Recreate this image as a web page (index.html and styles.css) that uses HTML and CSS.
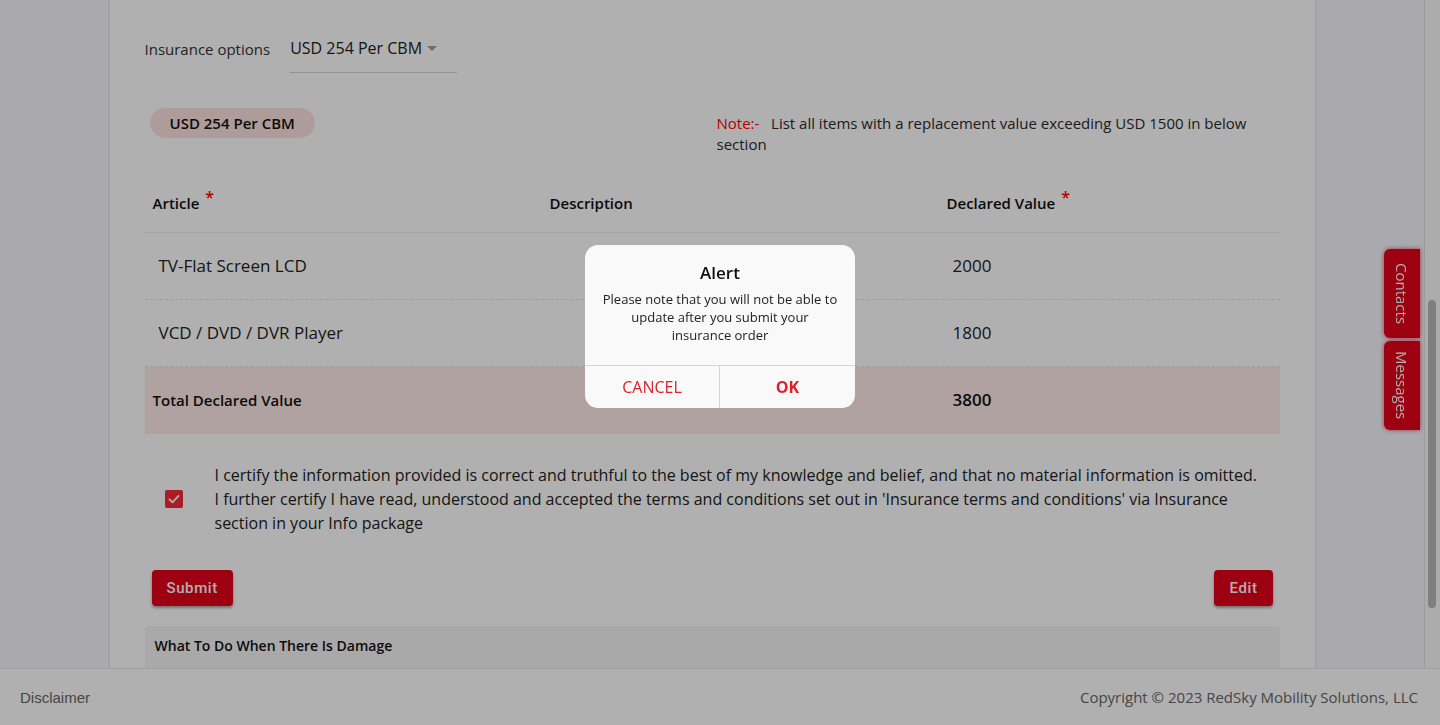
FILE: index.html
```html
<!DOCTYPE html>
<html lang="en">
<head>
  <meta charset="UTF-8">
  <meta name="viewport" content="width=device-width, initial-scale=1.0">
  <title>Insurance</title>
  <link rel="stylesheet" href="styles.css">
</head>
<body>
  <div class="app">
    <main class="main">
      <section class="card">
        <div class="option-row">
          <span class="option-label">Insurance options</span>
          <div class="select">USD 254 Per CBM <span class="caret"></span></div>
        </div>

        <div class="summary-row">
          <div class="summary-left"><span class="pill">USD 254 Per CBM</span></div>
          <p class="note"><span class="note-tag">Note:-</span>&nbsp;&nbsp; List all items with a replacement value exceeding USD 1500 in below section</p>
        </div>

        <div class="table">
          <div class="tr th">
            <div class="cell">Article <span class="req">*</span></div>
            <div class="cell">Description</div>
            <div class="cell">Declared Value <span class="req">*</span></div>
          </div>
          <div class="tr item">
            <div class="cell">TV-Flat Screen LCD</div>
            <div class="cell"></div>
            <div class="cell">2000</div>
          </div>
          <div class="tr item">
            <div class="cell">VCD / DVD / DVR Player</div>
            <div class="cell"></div>
            <div class="cell">1800</div>
          </div>
          <div class="tr total">
            <div class="cell">Total Declared Value</div>
            <div class="cell"></div>
            <div class="cell">3800</div>
          </div>
        </div>

        <div class="certify">
          <div class="check-wrap">
            <span class="checkbox">
              <svg viewBox="0 0 18 18"><path d="M4.5 9.3l3 3 6-6.4" fill="none" stroke="#fff" stroke-width="1.8" stroke-linecap="round" stroke-linejoin="round"/></svg>
            </span>
          </div>
          <p class="certify-text">I certify the information provided is correct and truthful to the best of my knowledge and belief, and that no material information is omitted.<br>I further certify I have read, understood and accepted the terms and conditions set out in 'Insurance terms and conditions' via Insurance section in your Info package</p>
        </div>

        <div class="actions">
          <button class="btn">Submit</button>
          <button class="btn">Edit</button>
        </div>

        <div class="damage">What To Do When There Is Damage</div>
      </section>
    </main>
    <div class="scrollbar"><div class="thumb"></div></div>
  </div>

  <div class="side-tabs">
    <div class="side-tab">Contacts</div>
    <div class="side-tab">Messages</div>
  </div>

  <footer class="footer">
    <span class="disclaimer">Disclaimer</span>
    <span class="copyright">Copyright © 2023 RedSky Mobility Solutions, LLC</span>
  </footer>

  <div class="overlay">
    <div class="alert">
      <h2>Alert</h2>
      <p>Please note that you will not be able to update after you submit your insurance order</p>
      <div class="alert-buttons">
        <button class="cancel">CANCEL</button>
        <button class="ok">OK</button>
      </div>
    </div>
  </div>
</body>
</html>
```

FILE: styles.css
```css
body {
  margin: 0;
  font-family: "Open Sans", Arial, sans-serif;
  background: #f5f5fc;
  color: #2b2b2b;
  overflow: hidden;
  height: 725px;
}
.app {
  display: flex;
  height: 100%;
}
.main {
  flex: 1;
  overflow: hidden;
}
.card {
  width: 1135px;
  margin: 0 auto;
  padding: 36px 35px 0;
  background: #fff;
  min-height: 760px;
  box-shadow: 0 0 2px rgba(0, 0, 0, 0.2);
}
.option-row {
  display: flex;
  align-items: flex-start;
  gap: 20px;
}
.option-label {
  font-size: 15px;
  line-height: 24px;
  padding-top: 1px;
  color: #333;
}
.select {
  width: 167px;
  font-size: 16px;
  line-height: 24px;
  padding-bottom: 12px;
  border-bottom: 1px solid #d6d6d6;
  display: flex;
  align-items: center;
  gap: 5px;
  color: #222;
}
.caret {
  width: 0;
  height: 0;
  border-left: 5px solid transparent;
  border-right: 5px solid transparent;
  border-top: 5px solid #9e9e9e;
  margin-top: 1px;
}
.summary-row {
  display: flex;
  align-items: flex-start;
  margin-top: 35px;
}
.summary-left {
  width: 567px;
  padding-left: 5px;
  box-sizing: border-box;
}
.pill {
  display: inline-block;
  height: 30px;
  line-height: 30px;
  padding: 0 20px;
  border-radius: 15px;
  background: #fde3e1;
  font-size: 15px;
  font-weight: 600;
  color: #111;
}
.note {
  flex: 1;
  margin: 0;
  padding: 5px 0 0 5px;
  font-size: 15px;
  line-height: 21px;
  color: #2b2b2b;
}
.note-tag {
  color: #ff0000;
}
.table {
  margin-top: 18px;
}
.tr {
  display: grid;
  grid-template-columns: 397px 397px 1fr;
  align-items: center;
  box-sizing: border-box;
}
.th {
  height: 60px;
  border-bottom: 1px solid #ececec;
  font-size: 15px;
  font-weight: 600;
  color: #111;
}
.th .cell {
  padding-left: 8px;
  line-height: 22px;
}
.req {
  color: #ff0000;
  font-size: 16px;
  line-height: 0;
  vertical-align: 6px;
  margin-left: 2px;
}
.item {
  height: 67px;
  border-bottom: 1px dashed #e4e4e4;
  font-size: 17px;
  color: #222;
}
.item .cell {
  padding-left: 14px;
  padding-bottom: 1px;
}
.total {
  height: 67px;
  background: #ffebe8;
  color: #111;
}
.total .cell {
  padding-left: 8px;
  padding-bottom: 1px;
  font-size: 15px;
  font-weight: 600;
}
.total .cell:last-child {
  padding-left: 14px;
  padding-bottom: 2px;
  font-size: 17px;
  font-weight: 600;
}
.certify {
  display: flex;
  align-items: center;
  margin-top: 29px;
}
.check-wrap {
  width: 70px;
  flex-shrink: 0;
  padding-left: 20px;
  box-sizing: border-box;
}
.checkbox {
  display: block;
  width: 18px;
  height: 18px;
  border-radius: 2px;
  background: #f22a3a;
}
.checkbox svg {
  width: 18px;
  height: 18px;
  display: block;
}
.certify-text {
  margin: 0;
  font-size: 16px;
  line-height: 24px;
  color: #222;
}
.actions {
  display: flex;
  justify-content: space-between;
  padding: 0 7px;
  margin-top: 35px;
}
.btn {
  height: 36px;
  padding: 0 15px;
  border: none;
  border-radius: 4px;
  background: #e2001a;
  color: #fff;
  font-family: Roboto, Arial, sans-serif;
  font-size: 15px;
  font-weight: 500;
  letter-spacing: 0.6px;
  box-shadow: 0 2px 3px rgba(0, 0, 0, 0.35);
}
.damage {
  margin-top: 20px;
  height: 80px;
  padding: 10px 10px 0;
  background: #f5f5f5;
  border-radius: 4px 4px 0 0;
  font-size: 14px;
  font-weight: 600;
  line-height: 20px;
  color: #111;
}
.scrollbar {
  width: 15px;
  background: #fafafa;
  border-left: 1px solid #e2e2e2;
}
.thumb {
  width: 8px;
  height: 308px;
  margin: 300px 0 0 3px;
  border-radius: 4px;
  background: #b8b8b8;
}
.side-tabs {
  position: fixed;
  top: 249px;
  right: 20px;
  display: flex;
  flex-direction: column;
  gap: 3px;
}
.side-tab {
  width: 36px;
  height: 89px;
  background: #e2001a;
  border-radius: 6px 0 0 6px;
  box-shadow: 0 0 4px rgba(226, 0, 26, 0.7);
  color: #fff;
  font-size: 15px;
  writing-mode: vertical-rl;
  display: flex;
  align-items: center;
  justify-content: center;
}
.footer {
  position: fixed;
  left: 0;
  right: 0;
  bottom: 0;
  height: 56px;
  background: #fff;
  border-top: 1px solid #e6e6e6;
  display: flex;
  align-items: center;
  justify-content: space-between;
  padding: 0 22px 0 20px;
  color: #666;
}
.disclaimer {
  font-family: "Liberation Sans", Arial, sans-serif;
  font-size: 15px;
}
.copyright {
  font-size: 15px;
}
.overlay {
  position: fixed;
  top: 0;
  left: 0;
  width: 100%;
  height: 100%;
  background: rgba(0, 0, 0, 0.31);
  display: flex;
  justify-content: center;
  align-items: flex-start;
  padding-top: 245px;
  box-sizing: border-box;
  z-index: 10;
}
.alert {
  width: 270px;
  background: #f9f9f9;
  border-radius: 13px;
  text-align: center;
  overflow: hidden;
}
.alert h2 {
  margin: 0;
  padding-top: 17px;
  font-size: 17px;
  line-height: 22px;
  font-weight: 600;
  color: #111;
}
.alert p {
  margin: 6px 0 0;
  padding: 0 16px 21px;
  font-size: 13px;
  line-height: 18px;
  color: #222;
}
.alert-buttons {
  display: grid;
  grid-template-columns: 1fr 1fr;
  border-top: 1px solid #d4d4d4;
}
.alert-buttons button {
  height: 42px;
  border: none;
  background: none;
  font-family: "Open Sans", Arial, sans-serif;
  font-size: 16px;
  color: #e0202e;
}
.alert-buttons .cancel {
  border-right: 1px solid #d4d4d4;
}
.alert-buttons .ok {
  font-weight: 700;
}
```
